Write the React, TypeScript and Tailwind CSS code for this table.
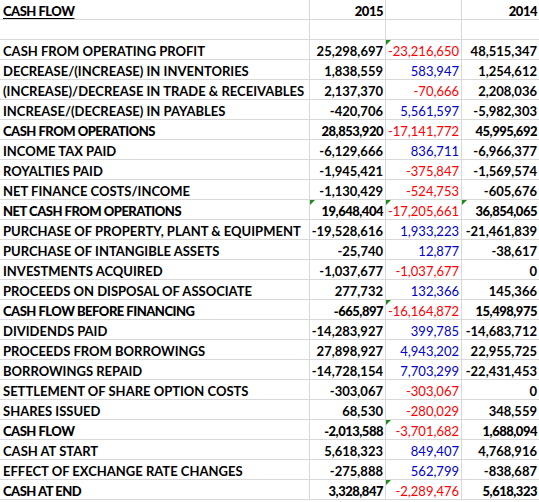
import React from "react";

type Row = {
  label: string;
  a: string;
  b: string;
  c: string;
  color: "red" | "blue";
  heavy?: boolean;
  tri?: number[];
};

const rows: Row[] = [
  { label: "CASH FROM OPERATING PROFIT", a: "25,298,697", b: "-23,216,650", c: "48,515,347", color: "red", tri: [2] },
  { label: "DECREASE/(INCREASE) IN INVENTORIES", a: "1,838,559", b: "583,947", c: "1,254,612", color: "blue" },
  { label: "(INCREASE)/DECREASE IN TRADE & RECEIVABLES", a: "2,137,370", b: "-70,666", c: "2,208,036", color: "red" },
  { label: "INCREASE/(DECREASE) IN PAYABLES", a: "-420,706", b: "5,561,597", c: "-5,982,303", color: "blue" },
  { label: "CASH FROM OPERATIONS", a: "28,853,920", b: "-17,141,772", c: "45,995,692", color: "red", heavy: true },
  { label: "INCOME TAX PAID", a: "-6,129,666", b: "836,711", c: "-6,966,377", color: "blue" },
  { label: "ROYALTIES PAID", a: "-1,945,421", b: "-375,847", c: "-1,569,574", color: "red" },
  { label: "NET FINANCE COSTS/INCOME", a: "-1,130,429", b: "-524,753", c: "-605,676", color: "red" },
  { label: "NET CASH FROM OPERATIONS", a: "19,648,404", b: "-17,205,661", c: "36,854,065", color: "red", heavy: true, tri: [1, 2, 3] },
  { label: "PURCHASE OF PROPERTY, PLANT & EQUIPMENT", a: "-19,528,616", b: "1,933,223", c: "-21,461,839", color: "blue" },
  { label: "PURCHASE OF INTANGIBLE ASSETS", a: "-25,740", b: "12,877", c: "-38,617", color: "blue" },
  { label: "INVESTMENTS ACQUIRED", a: "-1,037,677", b: "-1,037,677", c: "0", color: "red" },
  { label: "PROCEEDS ON DISPOSAL OF ASSOCIATE", a: "277,732", b: "132,366", c: "145,366", color: "blue" },
  { label: "CASH FLOW BEFORE FINANCING", a: "-665,897", b: "-16,164,872", c: "15,498,975", color: "red", heavy: true, tri: [2] },
  { label: "DIVIDENDS PAID", a: "-14,283,927", b: "399,785", c: "-14,683,712", color: "blue" },
  { label: "PROCEEDS FROM BORROWINGS", a: "27,898,927", b: "4,943,202", c: "22,955,725", color: "blue" },
  { label: "BORROWINGS REPAID", a: "-14,728,154", b: "7,703,299", c: "-22,431,453", color: "blue" },
  { label: "SETTLEMENT OF SHARE OPTION COSTS", a: "-303,067", b: "-303,067", c: "0", color: "red" },
  { label: "SHARES ISSUED", a: "68,530", b: "-280,029", c: "348,559", color: "red" },
  { label: "CASH FLOW", a: "-2,013,588", b: "-3,701,682", c: "1,688,094", color: "red", heavy: true, tri: [2] },
  { label: "CASH AT START", a: "5,618,323", b: "849,407", c: "4,768,916", color: "blue" },
  { label: "EFFECT OF EXCHANGE RATE CHANGES", a: "-275,888", b: "562,799", c: "-838,687", color: "blue" },
  { label: "CASH AT END", a: "3,328,847", b: "-2,289,476", c: "5,618,323", color: "red", heavy: true, tri: [2] },
];

function Tri() {
  return (
    <span className="absolute left-0 top-0 w-0 h-0 border-t-[5px] border-t-[#1e8a1e] border-r-[5px] border-r-transparent" />
  );
}

function Cell({
  children,
  right,
  last,
  className = "",
  tri,
}: {
  children?: React.ReactNode;
  right?: boolean;
  last?: boolean;
  className?: string;
  tri?: boolean;
}) {
  return (
    <div
      className={`relative h-[20px] border-b border-[#d9d9d9] ${last ? "" : "border-r"} flex items-end pb-[1px] whitespace-nowrap overflow-hidden ${
        right ? "justify-end pr-[2px]" : "pl-[3px]"
      } ${className}`}
    >
      {tri && <Tri />}
      {children}
    </div>
  );
}

export default function App() {
  return (
    <div
      className="w-[539px] h-[502px] bg-white text-black text-[13px] leading-none"
      style={{ fontFamily: "Lato, 'Liberation Sans', sans-serif" }}
    >
      <div className="grid grid-cols-[310px_76px_76px_77px]">
        <Cell className="font-black tracking-[-0.5px]">
          <span className="underline underline-offset-2">CASH FLOW</span>
        </Cell>
        <Cell right className="font-black tracking-[-0.5px]">2015</Cell>
        <Cell />
        <Cell right last className="font-black tracking-[-0.5px]">2014</Cell>

        <Cell />
        <Cell />
        <Cell />
        <Cell last />

        {rows.map((r, i) => {
          const w = r.heavy ? "font-black tracking-[-0.5px]" : "font-bold";
          const col = r.color === "red" ? "text-[#ff0000] font-normal" : "text-[#0000c8] font-normal";
          return (
            <React.Fragment key={i}>
              <Cell className={w}>{r.label}</Cell>
              <Cell right className={w} tri={r.tri?.includes(1)}>{r.a}</Cell>
              <Cell right className={col} tri={r.tri?.includes(2)}>{r.b}</Cell>
              <Cell right last className={w} tri={r.tri?.includes(3)}>{r.c}</Cell>
            </React.Fragment>
          );
        })}
      </div>
    </div>
  );
}
